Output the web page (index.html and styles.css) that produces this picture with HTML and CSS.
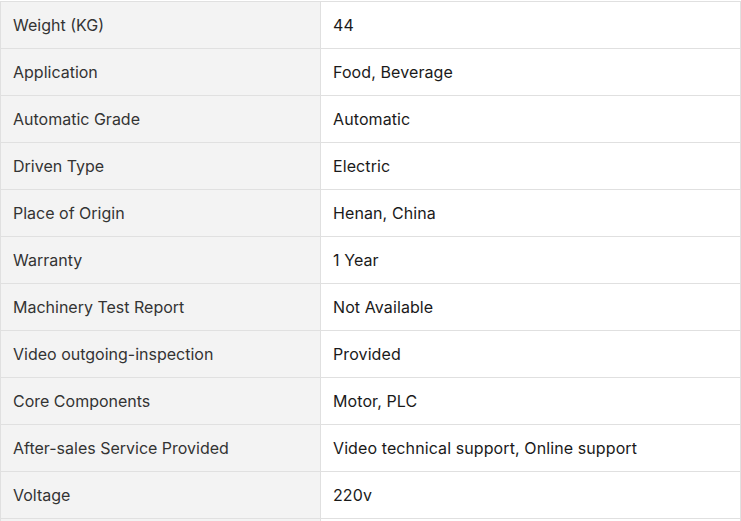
FILE: index.html
```html
<!DOCTYPE html>
<html>
<head>
<meta charset="utf-8">
<link rel="stylesheet" href="styles.css">
</head>
<body>
<table class="specs">
<tbody>
<tr><td class="k">Weight (KG)</td><td class="v">44</td></tr>
<tr><td class="k">Application</td><td class="v">Food, Beverage</td></tr>
<tr><td class="k">Automatic Grade</td><td class="v">Automatic</td></tr>
<tr><td class="k">Driven Type</td><td class="v">Electric</td></tr>
<tr><td class="k">Place of Origin</td><td class="v">Henan, China</td></tr>
<tr><td class="k">Warranty</td><td class="v">1 Year</td></tr>
<tr><td class="k">Machinery Test Report</td><td class="v">Not Available</td></tr>
<tr><td class="k">Video outgoing-inspection</td><td class="v">Provided</td></tr>
<tr><td class="k">Core Components</td><td class="v">Motor, PLC</td></tr>
<tr><td class="k">After-sales Service Provided</td><td class="v">Video technical support, Online support</td></tr>
<tr><td class="k">Voltage</td><td class="v">220v</td></tr>
<tr><td class="k"></td><td class="v"></td></tr>
</tbody>
</table>
</body>
</html>
```
FILE: styles.css
```css
html, body {
  margin: 0;
  padding: 0;
  background: #fff;
}
body {
  padding-top: 1px;
  font-family: Inter, "Noto Sans", sans-serif;
  font-size: 16px;
}
.specs {
  border-collapse: collapse;
  width: 741px;
  table-layout: fixed;
}
.specs td {
  border: 1px solid #e0e0e0;
  height: 47px;
  padding: 0 12px;
  box-sizing: border-box;
  vertical-align: middle;
  line-height: 20px;
}
.specs td.k {
  width: 320px;
  background: #f3f3f3;
  color: #333;
}
.specs td.v {
  background: #fff;
  color: #1a1a1a;
  font-weight: 400;
  letter-spacing: 0.1px;
}
```
